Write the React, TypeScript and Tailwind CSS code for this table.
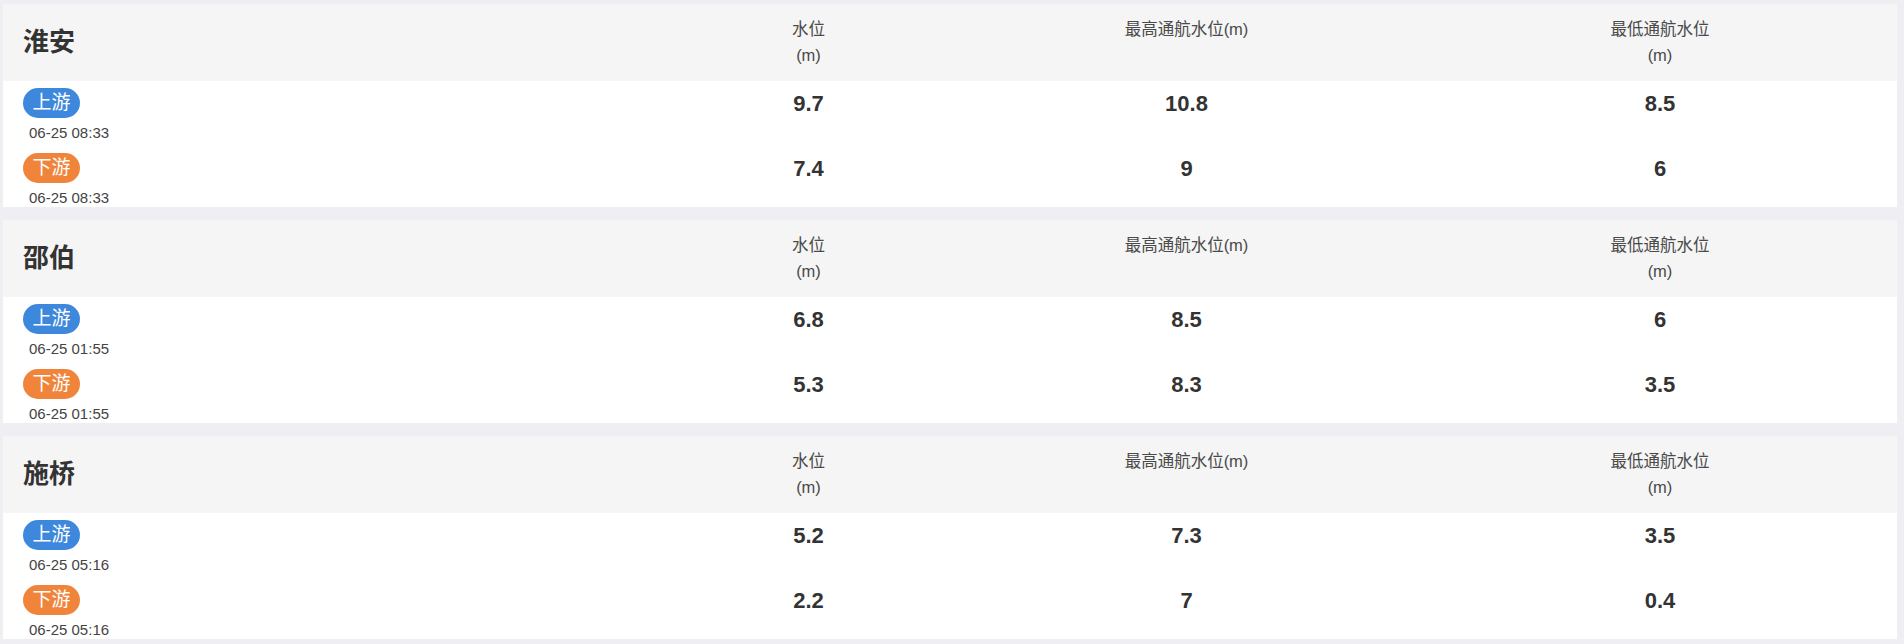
import React from 'react';

type Reading = { kind: 'up' | 'down'; time: string; level: string; max: string; min: string };

const STATIONS: { name: string; rows: Reading[] }[] = [
  {
    name: '淮安',
    rows: [
      { kind: 'up', time: '06-25 08:33', level: '9.7', max: '10.8', min: '8.5' },
      { kind: 'down', time: '06-25 08:33', level: '7.4', max: '9', min: '6' },
    ],
  },
  {
    name: '邵伯',
    rows: [
      { kind: 'up', time: '06-25 01:55', level: '6.8', max: '8.5', min: '6' },
      { kind: 'down', time: '06-25 01:55', level: '5.3', max: '8.3', min: '3.5' },
    ],
  },
  {
    name: '施桥',
    rows: [
      { kind: 'up', time: '06-25 05:16', level: '5.2', max: '7.3', min: '3.5' },
      { kind: 'down', time: '06-25 05:16', level: '2.2', max: '7', min: '0.4' },
    ],
  },
];

// name | water level | max navigable | min navigable
const cols = 'grid grid-cols-[664px_283px_473px_474px]';

const StationCard: React.FC<{ name: string; rows: Reading[] }> = ({ name, rows }) => (
  <div className="bg-white">
    {/* Header */}
    <div className={`${cols} h-[77px] bg-[#f5f5f5] text-[#4a4a4a] text-[16.5px]`}>
      <div className="flex items-center pl-[20px] text-[26px] font-bold text-[#333]">{name}</div>
      <div className="pt-[12px] text-center leading-[26px]">
        水位
        <br />
        (m)
      </div>
      <div className="pt-[12px] text-center leading-[26px]">最高通航水位(m)</div>
      <div className="pt-[12px] text-center leading-[26px]">
        最低通航水位
        <br />
        (m)
      </div>
    </div>

    {/* Rows */}
    <div className="flex flex-col gap-[11px] pt-[7px]">
      {rows.map((r) => (
        <div key={r.kind} className={cols}>
          <div className="pl-[20px]">
            <span
              className={`inline-flex h-[30px] w-[57px] items-center justify-center rounded-full text-[19px] text-white ${
                r.kind === 'up' ? 'bg-[#3d88dc]' : 'bg-[#f0843b]'
              }`}
            >
              {r.kind === 'up' ? '上游' : '下游'}
            </span>
            <div className="mt-[6px] pl-[6px] text-[15px] leading-[18px] text-[#444]">{r.time}</div>
          </div>
          <div className="h-[30px] flex items-center justify-center text-[22px] font-bold text-[#333]">{r.level}</div>
          <div className="h-[30px] flex items-center justify-center text-[22px] font-bold text-[#333]">{r.max}</div>
          <div className="h-[30px] flex items-center justify-center text-[22px] font-bold text-[#333]">{r.min}</div>
        </div>
      ))}
    </div>
  </div>
);

export default function App() {
  return (
    <div
      className="min-h-[644px] bg-[#eeeef3] pl-[3px] pr-[7px] pt-[4px] flex flex-col gap-[13px]"
      style={{ fontFamily: '"Liberation Sans", "Noto Sans CJK SC", sans-serif' }}
    >
      {STATIONS.map((s) => (
        <StationCard key={s.name} name={s.name} rows={s.rows} />
      ))}
    </div>
  );
}
